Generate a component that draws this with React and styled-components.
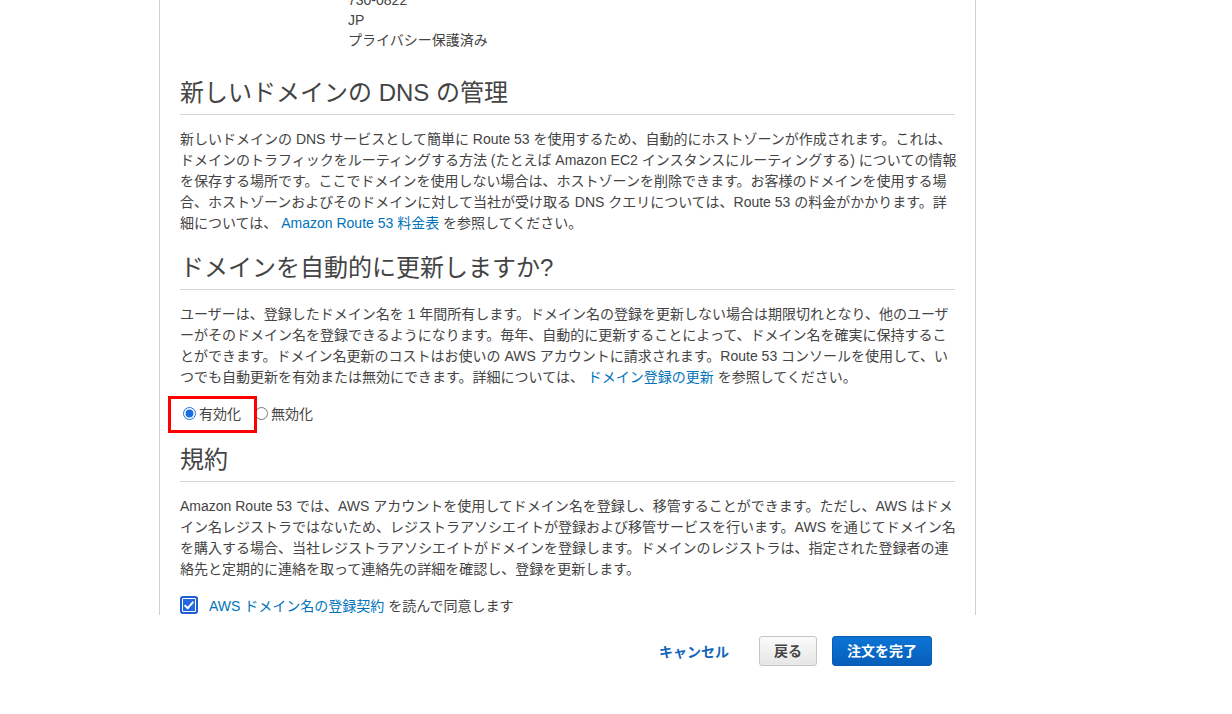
import React from "react";
import styled, { createGlobalStyle } from "styled-components";

const GlobalStyle = createGlobalStyle`
    body {
        margin: 0;
        background: #fff;
        font-family: "Liberation Sans", "Noto Sans CJK JP", sans-serif;
        color: #444;
    }
`;

const Colors = {
    text: "#444",
    link: "#0073bb",
    rule: "#d5d5d5",
    border: "#cfcfcf",
};

const StyledPage = styled.div`
    width: 1232px;
    height: 714px;
    overflow: hidden;
`;

const StyledPanel = styled.div`
    box-sizing: border-box;
    width: 817px;
    height: 615px;
    margin-left: 159px;
    padding: 0 20px;
    border-left: 1px solid ${Colors.border};
    border-right: 1px solid ${Colors.border};
    overflow: hidden;
`;

const StyledAddress = styled.div`
    margin-top: -10px;
    padding-left: 168px;
    font-size: 14px;
    line-height: 20px;
`;

const StyledHeading = styled.h2`
    margin: ${(p) => p.$top}px 0 14px;
    padding-bottom: 6px;
    border-bottom: 1px solid ${Colors.rule};
    font-size: 24px;
    line-height: 30px;
    font-weight: normal;
    color: ${Colors.text};
`;

const StyledText = styled.p`
    margin: 0;
    font-size: 14px;
    line-height: 21px;
    white-space: nowrap;

    a {
        color: ${Colors.link};
        text-decoration: none;
    }
`;

const StyledRadioRow = styled.div`
    position: relative;
    display: flex;
    align-items: center;
    height: 20px;
    margin: 15px 0 0 3px;
    font-size: 14px;

    input {
        width: 13px;
        height: 13px;
        margin: 0 3px 0 0;
        accent-color: #1a6ee0;
    }

    label {
        margin-right: 14px;
    }
`;

const StyledHighlight = styled.div`
    position: absolute;
    left: -15px;
    top: -7px;
    width: 89px;
    height: 37px;
    box-sizing: border-box;
    border: 3px solid #f00;
    pointer-events: none;
`;

const StyledCheckRow = styled.div`
    display: flex;
    align-items: center;
    height: 20px;
    margin-top: 15px;
    font-size: 14px;

    a {
        color: ${Colors.link};
        text-decoration: none;
        margin-right: 4px;
    }
`;

const StyledCheckbox = styled.span`
    box-sizing: border-box;
    width: 18px;
    height: 18px;
    margin-right: 11px;
    border: 2px solid #1f5fd6;
    border-radius: 3px;
    background: #2368e0;
    box-shadow: inset 0 0 0 1px #fff;
    display: flex;
    align-items: center;
    justify-content: center;
`;

const StyledActions = styled.div`
    box-sizing: border-box;
    width: 817px;
    margin: 21px 0 0 159px;
    padding-right: 44px;
    display: flex;
    justify-content: flex-end;
    align-items: center;
`;

const StyledCancel = styled.a`
    margin-right: 30px;
    font-size: 14px;
    font-weight: bold;
    color: #1166bb;
    cursor: pointer;
`;

const StyledButton = styled.button`
    height: 30px;
    padding: 0 14px;
    margin-left: ${(p) => (p.$primary ? 15 : 0)}px;
    border-radius: 3px;
    border: 1px solid ${(p) => (p.$primary ? "#0b5db3" : "#c6c6c6")};
    background: ${(p) =>
        p.$primary
            ? "linear-gradient(#0c74d6, #075fb9)"
            : "linear-gradient(#fbfbfb, #e6e6e6)"};
    color: ${(p) => (p.$primary ? "#fff" : "#444")};
    font-family: inherit;
    font-size: 14px;
    font-weight: bold;
    line-height: 28px;
    cursor: pointer;
`;

const CheckIcon = () => (
    <svg width="10" height="9" viewBox="0 0 10 9">
        <path d="M1.2 4.8 L3.8 7.2 L8.8 1.4" fill="none" stroke="#fff" strokeWidth="2" strokeLinecap="round" strokeLinejoin="round" />
    </svg>
);

const App = () => {
    return (
        <StyledPage>
            <GlobalStyle />
            <StyledPanel>
                <StyledAddress>
                    730-0822
                    <br />
                    JP
                    <br />
                    プライバシー保護済み
                </StyledAddress>

                <StyledHeading $top={28}>新しいドメインの DNS の管理</StyledHeading>
                <StyledText>
                    新しいドメインの DNS サービスとして簡単に Route 53 を使用するため、自動的にホストゾーンが作成されます。これは、
                    <br />
                    ドメインのトラフィックをルーティングする方法 (たとえば Amazon EC2 インスタンスにルーティングする) についての情報
                    <br />
                    を保存する場所です。ここでドメインを使用しない場合は、ホストゾーンを削除できます。お客様のドメインを使用する場
                    <br />
                    合、ホストゾーンおよびそのドメインに対して当社が受け取る DNS クエリについては、Route 53 の料金がかかります。詳
                    <br />
                    細については、 <a href="#pricing">Amazon Route 53 料金表</a> を参照してください。
                </StyledText>

                <StyledHeading $top={19}>ドメインを自動的に更新しますか?</StyledHeading>
                <StyledText>
                    ユーザーは、登録したドメイン名を 1 年間所有します。ドメイン名の登録を更新しない場合は期限切れとなり、他のユーザ
                    <br />
                    ーがそのドメイン名を登録できるようになります。毎年、自動的に更新することによって、ドメイン名を確実に保持するこ
                    <br />
                    とができます。ドメイン名更新のコストはお使いの AWS アカウントに請求されます。Route 53 コンソールを使用して、い
                    <br />
                    つでも自動更新を有効または無効にできます。詳細については、 <a href="#renew">ドメイン登録の更新</a> を参照してください。
                </StyledText>
                <StyledRadioRow>
                    <input type="radio" name="renew" id="renew-on" defaultChecked />
                    <label htmlFor="renew-on">有効化</label>
                    <input type="radio" name="renew" id="renew-off" />
                    <label htmlFor="renew-off">無効化</label>
                    <StyledHighlight />
                </StyledRadioRow>

                <StyledHeading $top={22}>規約</StyledHeading>
                <StyledText>
                    Amazon Route 53 では、AWS アカウントを使用してドメイン名を登録し、移管することができます。ただし、AWS はドメ
                    <br />
                    イン名レジストラではないため、レジストラアソシエイトが登録および移管サービスを行います。AWS を通じてドメイン名
                    <br />
                    を購入する場合、当社レジストラアソシエイトがドメインを登録します。ドメインのレジストラは、指定された登録者の連
                    <br />
                    絡先と定期的に連絡を取って連絡先の詳細を確認し、登録を更新します。
                </StyledText>
                <StyledCheckRow>
                    <StyledCheckbox>
                        <CheckIcon />
                    </StyledCheckbox>
                    <a href="#terms">AWS ドメイン名の登録契約</a>
                    を読んで同意します
                </StyledCheckRow>
            </StyledPanel>

            <StyledActions>
                <StyledCancel>キャンセル</StyledCancel>
                <StyledButton>戻る</StyledButton>
                <StyledButton $primary>注文を完了</StyledButton>
            </StyledActions>
        </StyledPage>
    );
};

export default App;
